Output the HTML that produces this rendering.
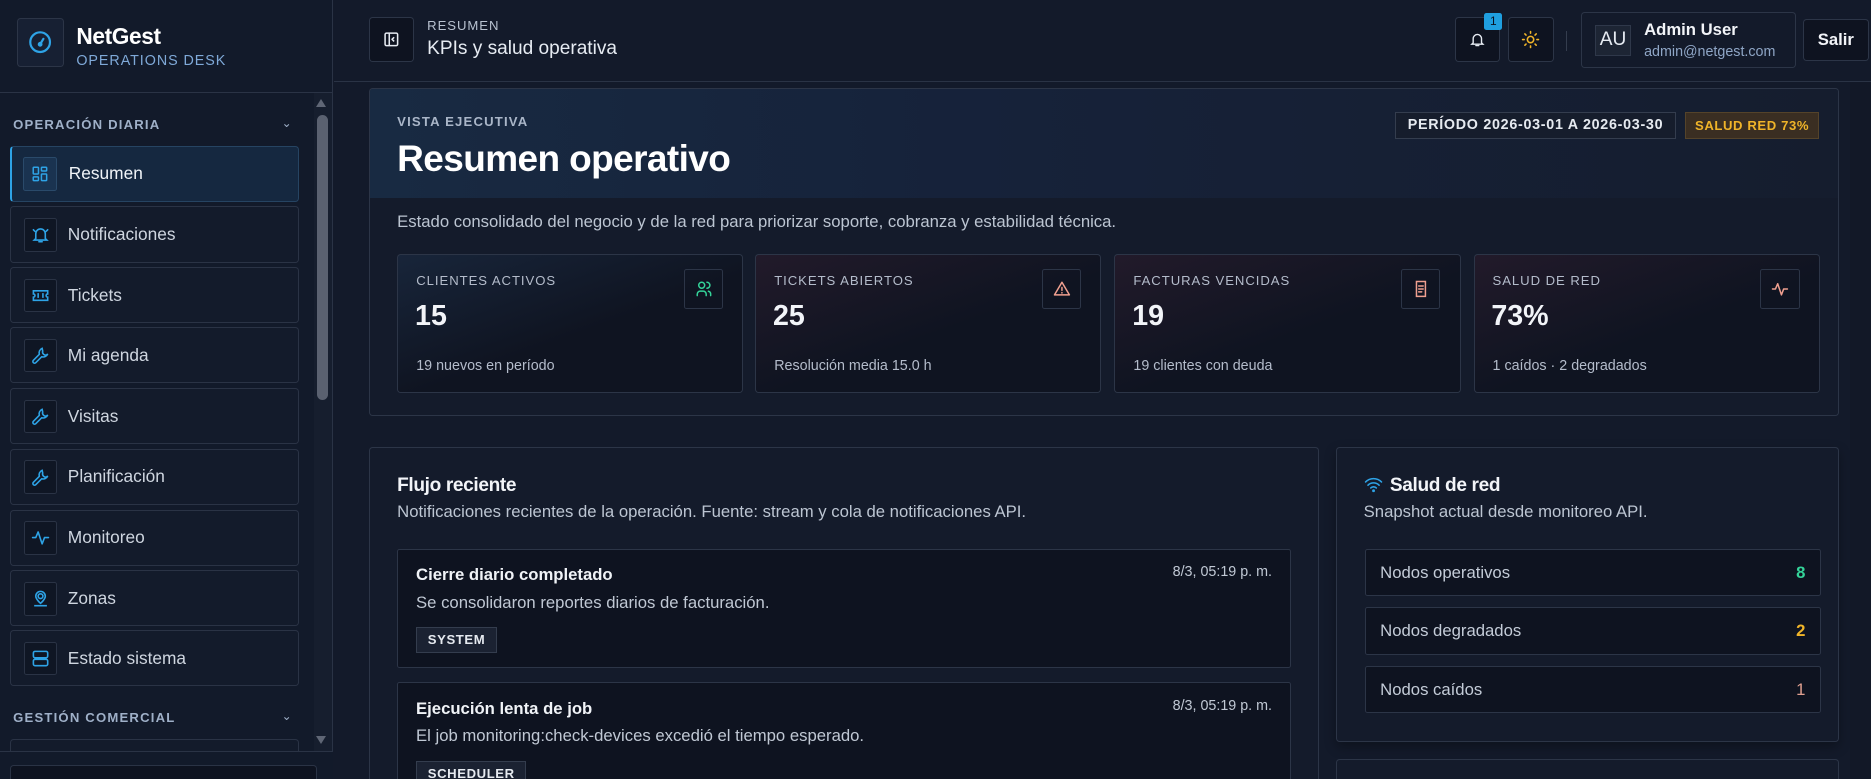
<!DOCTYPE html>
<html><head><meta charset="utf-8"><style>
*{box-sizing:border-box;margin:0;padding:0}
html,body{width:1871px;height:779px;overflow:hidden;background:#131a2a}
#w{zoom:1.19324;width:1568px;height:653px;position:relative;font-family:"Liberation Sans",sans-serif;color:#e6ebf2;background:#131a2a;overflow:hidden}
.a{position:absolute}
.sb{left:0;top:0;width:279px;height:653px;background:#121a2a;border-right:1px solid #2a3345}
.box{border:1px solid #2c3547;border-radius:3px}
.nav{left:8px;width:243px;height:47px;border:1px solid #2a3345;border-radius:3px;background:#131b2b}
.nav .ic{position:absolute;left:11px;top:9px;width:28px;height:28px;border:1px solid #2a3345;border-radius:2px;background:#0f1624;display:flex;align-items:center;justify-content:center}
.nav span{position:absolute;left:48px;top:14px;font-size:14.5px;color:#cfd6e0}
.lab{font-size:11px;font-weight:bold;letter-spacing:1px;color:#9fb0c8}
.kpi{top:213px;width:290px;height:116px;border:1px solid #2c3547;border-radius:3px;background:linear-gradient(160deg,#1a1f30 0%,#0f1421 60%)}
.kpi .l{position:absolute;left:15px;top:15px;font-size:11px;letter-spacing:.8px;color:#b4bccb}
.kpi .v{position:absolute;left:14px;top:38px;font-size:24px;font-weight:bold;color:#f2f4f8}
.kpi .s{position:absolute;left:15px;top:86px;font-size:12px;color:#b4bccb}
.kpi .ib{position:absolute;right:16px;top:12px;width:33px;height:33px;border:1px solid #2c3547;border-radius:2px;display:flex;align-items:center;justify-content:center}
.row{left:23px;width:382px;height:40px;border:1px solid #2c3547;border-radius:2px;background:#0e1320;font-size:14px;color:#c4ccd8}
.row span{position:absolute;left:12px;top:11px}
.row b{position:absolute;right:12px;top:11px;font-weight:bold}
.item{left:23px;width:749px;border:1px solid #2c3547;border-radius:2px;background:#0e1320}
.item .t{position:absolute;left:15px;top:13px;font-size:14px;font-weight:bold;color:#f0f3f7}
.item .d{position:absolute;left:15px;top:36px;font-size:14px;color:#c0c8d4}
.item .tm{position:absolute;right:15px;top:12px;font-size:12px;color:#c0c8d4}
.item .tg{position:absolute;left:15px;top:65px;height:22px;padding:0 9px;border:1px solid #343d4e;background:#1b2232;font-size:11px;font-weight:bold;line-height:20px;letter-spacing:.5px;color:#e6eaf0}
svg{display:block}
</style></head><body><div id="w">

<div class="a sb">
  <div class="a" style="left:0;top:77px;width:279px;height:1px;background:#2a3345"></div>
  <div class="a box" style="left:14px;top:15px;width:40px;height:41px;background:#172033;display:flex;align-items:center;justify-content:center">
    <svg width="22" height="22" viewBox="0 0 24 24" fill="none" stroke="#2ea3e6" stroke-width="2" stroke-linecap="round"><circle cx="12" cy="12" r="9"/><path d="M12 14l3-5"/><circle cx="12" cy="14" r="1.2"/></svg>
  </div>
  <div class="a" style="left:64px;top:19px;font-size:19px;font-weight:bold;color:#fff;letter-spacing:-.3px">NetGest</div>
  <div class="a" style="left:64px;top:44px;font-size:12px;color:#7fa9d8;letter-spacing:.8px">OPERATIONS DESK</div>

  <div class="a lab" style="left:11px;top:98px">OPERACIÓN DIARIA</div>
  <div class="a" style="left:236px;top:97px;font-size:10px;color:#9fb0c8">&#8964;</div>

  <div class="a nav" style="top:122px;background:#152840;border-color:#264462;border-left:2px solid #2ea3e6">
    <div class="ic" style="left:10px;background:#1a3350;border-color:#2a4a6a"><svg width="15" height="15" viewBox="0 0 24 24" fill="none" stroke="#2ea3e6" stroke-width="2"><rect x="3" y="3" width="7" height="9" rx="1"/><rect x="14" y="3" width="7" height="5" rx="1"/><rect x="14" y="12" width="7" height="9" rx="1"/><rect x="3" y="16" width="7" height="5" rx="1"/></svg></div>
    <span style="color:#f0f4f8">Resumen</span></div>
  <div class="a nav" style="top:173px"><div class="ic"><svg width="16" height="16" viewBox="0 0 24 24" fill="none" stroke="#2ea3e6" stroke-width="2" stroke-linecap="round"><path d="M6 17V11a6 6 0 0112 0v6l2 2H4l2-2z"/><path d="M10 21h4M3 6l2 2M21 6l-2 2"/></svg></div><span>Notificaciones</span></div>
  <div class="a nav" style="top:224px"><div class="ic"><svg width="16" height="16" viewBox="0 0 24 24" fill="none" stroke="#2ea3e6" stroke-width="2"><path d="M3 6h18v4a2 2 0 000 4v4H3v-4a2 2 0 000-4z"/><path d="M9 9v6M15 9v6"/></svg></div><span>Tickets</span></div>
  <div class="a nav" style="top:274px"><div class="ic"><svg width="16" height="16" viewBox="0 0 24 24" fill="none" stroke="#2ea3e6" stroke-width="2" stroke-linecap="round"><path d="M14.7 6.3a4 4 0 005 5L21 10a6 6 0 01-7.5 3.5L6 21a2 2 0 01-3-3l7.5-7.5A6 6 0 0114 3z"/></svg></div><span>Mi agenda</span></div>
  <div class="a nav" style="top:325px"><div class="ic"><svg width="16" height="16" viewBox="0 0 24 24" fill="none" stroke="#2ea3e6" stroke-width="2" stroke-linecap="round"><path d="M14.7 6.3a4 4 0 005 5L21 10a6 6 0 01-7.5 3.5L6 21a2 2 0 01-3-3l7.5-7.5A6 6 0 0114 3z"/></svg></div><span>Visitas</span></div>
  <div class="a nav" style="top:376px"><div class="ic"><svg width="16" height="16" viewBox="0 0 24 24" fill="none" stroke="#2ea3e6" stroke-width="2" stroke-linecap="round"><path d="M14.7 6.3a4 4 0 005 5L21 10a6 6 0 01-7.5 3.5L6 21a2 2 0 01-3-3l7.5-7.5A6 6 0 0114 3z"/></svg></div><span>Planificación</span></div>
  <div class="a nav" style="top:427px"><div class="ic"><svg width="16" height="16" viewBox="0 0 24 24" fill="none" stroke="#2ea3e6" stroke-width="2" stroke-linecap="round" stroke-linejoin="round"><path d="M2 12h4l3-7 5 15 3-8h5"/></svg></div><span>Monitoreo</span></div>
  <div class="a nav" style="top:478px"><div class="ic"><svg width="16" height="16" viewBox="0 0 24 24" fill="none" stroke="#2ea3e6" stroke-width="2"><circle cx="12" cy="9" r="3"/><path d="M12 18s-6-5-6-9a6 6 0 0112 0c0 4-6 9-6 9z"/><path d="M4 21h16"/></svg></div><span>Zonas</span></div>
  <div class="a nav" style="top:528px"><div class="ic"><svg width="16" height="16" viewBox="0 0 24 24" fill="none" stroke="#2ea3e6" stroke-width="2"><rect x="3" y="3" width="18" height="8" rx="2"/><rect x="3" y="13" width="18" height="8" rx="2"/></svg></div><span>Estado sistema</span></div>

  <div class="a lab" style="left:11px;top:595px">GESTIÓN COMERCIAL</div>
  <div class="a" style="left:236px;top:594px;font-size:10px;color:#9fb0c8">&#8964;</div>
  <div class="a nav" style="top:619px;height:20px;border-bottom:none"></div>
  <div class="a" style="left:263px;top:78px;width:15px;height:551px;background:#161e2e"></div>
  <div class="a" style="left:265px;top:83px;width:0;height:0;border-left:5px solid transparent;border-right:5px solid transparent;border-bottom:7px solid #5f6675"></div>
  <div class="a" style="left:266px;top:96px;width:9px;height:239px;background:#5a6170;border-radius:5px"></div>
  <div class="a" style="left:265px;top:617px;width:0;height:0;border-left:5px solid transparent;border-right:5px solid transparent;border-top:7px solid #5f6675"></div>
  <div class="a" style="left:0;top:629px;width:279px;height:24px;background:#121a2a;border-top:1px solid #2a3345"></div>
  <div class="a" style="left:8px;top:641px;width:258px;height:20px;background:#0e1320;border:1px solid #2a3345;border-radius:3px"></div>
</div>

<div class="a" style="left:280px;top:68px;width:1288px;height:1px;background:#2a3345"></div>
<div class="a box" style="left:309px;top:14px;width:38px;height:38px;background:#0e1320;display:flex;align-items:center;justify-content:center">
  <svg width="14" height="14" viewBox="0 0 24 24" fill="none" stroke="#e6ebf2" stroke-width="2.2" stroke-linejoin="round"><rect x="3" y="3" width="18" height="18" rx="2"/><path d="M9 3v18M16 9l-3 3 3 3"/></svg>
</div>
<div class="a" style="left:358px;top:15px;font-size:11px;letter-spacing:.8px;color:#b8c2d0">RESUMEN</div>
<div class="a" style="left:358px;top:32px;font-size:16px;color:#e6ebf2">KPIs y salud operativa</div>

<div class="a box" style="left:1219px;top:14px;width:38px;height:38px;background:#0e1320;display:flex;align-items:center;justify-content:center">
  <svg width="14" height="14" viewBox="0 0 24 24" fill="none" stroke="#e6ebf2" stroke-width="2" stroke-linecap="round"><path d="M6 17V11a6 6 0 0112 0v6l2 2H4l2-2z"/><path d="M10 21h4"/></svg>
</div>
<div class="a" style="left:1244px;top:11px;width:15px;height:14px;background:#1f9fe0;border-radius:2px;font-size:10px;text-align:center;line-height:14px;color:#0b1220">1</div>
<div class="a box" style="left:1264px;top:14px;width:38px;height:38px;background:#0e1320;display:flex;align-items:center;justify-content:center">
  <svg width="16" height="16" viewBox="0 0 24 24" fill="none" stroke="#f0b429" stroke-width="2" stroke-linecap="round"><circle cx="12" cy="12" r="4"/><path d="M12 2v2M12 20v2M2 12h2M20 12h2M4.9 4.9l1.4 1.4M17.7 17.7l1.4 1.4M4.9 19.1l1.4-1.4M17.7 6.3l1.4-1.4"/></svg>
</div>
<div class="a" style="left:1312px;top:26px;width:1px;height:17px;background:#343d4e"></div>
<div class="a box" style="left:1325px;top:10px;width:180px;height:47px;background:#131a2a">
  <div class="a" style="left:11px;top:10px;width:30px;height:26px;background:#1d2534;border:1px solid #2f384a;font-size:16px;color:#e6ebf2;text-align:center;line-height:24px">AU</div>
  <div class="a" style="left:52px;top:6px;font-size:14px;font-weight:bold;color:#f2f4f8">Admin User</div>
  <div class="a" style="left:52px;top:26px;font-size:12px;color:#8fa6c6">admin@netgest.com</div>
</div>
<div class="a box" style="left:1511px;top:16px;width:55px;height:35px;background:#0e1320;font-size:14px;font-weight:bold;color:#f2f4f8;text-align:center;line-height:33px">Salir</div>

<div class="a" style="left:309px;top:74px;width:1232px;height:275px;border:1px solid #2c3547;border-radius:3px;background:#141b2b;overflow:hidden">
  <div class="a" style="left:0;top:0;width:1232px;height:91px;background:linear-gradient(90deg,#182a42 0%,#16223a 40%,#151d2e 100%)"></div>
  <div class="a" style="left:23px;top:21px;font-size:11px;font-weight:bold;letter-spacing:1px;color:#aab6c8">VISTA EJECUTIVA</div>
  <div class="a" style="left:23px;top:41px;font-size:31px;font-weight:bold;color:#fff;letter-spacing:-.5px">Resumen operativo</div>
  <div class="a" style="left:859px;top:19px;width:236px;height:23px;border:1px solid #343d4e;background:#161d2c;font-size:12px;font-weight:bold;letter-spacing:.6px;color:#e6eaf0;text-align:center;line-height:21px">PERÍODO 2026-03-01 A 2026-03-30</div>
  <div class="a" style="left:1102px;top:19px;width:113px;height:23px;border:1px solid #54432a;background:#3a2e22;font-size:11px;font-weight:bold;letter-spacing:.5px;color:#f0b429;text-align:center;line-height:21px">SALUD RED 73%</div>
  <div class="a" style="left:23px;top:103px;font-size:14px;color:#bcc5d2">Estado consolidado del negocio y de la red para priorizar soporte, cobranza y estabilidad técnica.</div>
</div>
<div class="a kpi" style="left:333px;background:linear-gradient(160deg,#18253a 0%,#0f1421 55%)"><div class="l">CLIENTES ACTIVOS</div><div class="v">15</div><div class="s">19 nuevos en período</div>
  <div class="ib"><svg width="15" height="15" viewBox="0 0 24 24" fill="none" stroke="#34d399" stroke-width="2" stroke-linecap="round"><circle cx="9" cy="7" r="4"/><path d="M3 21v-2a4 4 0 014-4h4a4 4 0 014 4v2M16 3a4 4 0 010 8M21 21v-2a4 4 0 00-3-3.9"/></svg></div></div>
<div class="a kpi" style="left:633px;background:linear-gradient(160deg,#221a2a 0%,#0f1421 55%)"><div class="l">TICKETS ABIERTOS</div><div class="v">25</div><div class="s">Resolución media 15.0 h</div>
  <div class="ib"><svg width="15" height="15" viewBox="0 0 24 24" fill="none" stroke="#f0a090" stroke-width="2" stroke-linecap="round" stroke-linejoin="round"><path d="M12 3L2 20h20z"/><path d="M12 10v4M12 17v.5"/></svg></div></div>
<div class="a kpi" style="left:934px;background:linear-gradient(160deg,#221a2a 0%,#0f1421 55%)"><div class="l">FACTURAS VENCIDAS</div><div class="v">19</div><div class="s">19 clientes con deuda</div>
  <div class="ib"><svg width="15" height="15" viewBox="0 0 24 24" fill="none" stroke="#f0a090" stroke-width="2" stroke-linecap="round"><path d="M6 2h12v20H6z"/><path d="M9 8h6M9 12h6M9 16h4"/></svg></div></div>
<div class="a kpi" style="left:1235px;background:linear-gradient(160deg,#221a2a 0%,#0f1421 55%)"><div class="l">SALUD DE RED</div><div class="v">73%</div><div class="s">1 caídos · 2 degradados</div>
  <div class="ib"><svg width="15" height="15" viewBox="0 0 24 24" fill="none" stroke="#f0a090" stroke-width="2" stroke-linecap="round" stroke-linejoin="round"><path d="M2 12h4l3-7 5 15 3-8h5"/></svg></div></div>

<div class="a" style="left:309px;top:375px;width:796px;height:290px;border:1px solid #2c3547;border-radius:3px;background:#141b2b">
  <div class="a" style="left:23px;top:22px;font-size:16px;font-weight:bold;color:#f2f4f8;letter-spacing:-.3px">Flujo reciente</div>
  <div class="a" style="left:23px;top:45px;font-size:14px;color:#bcc5d2">Notificaciones recientes de la operación. Fuente: stream y cola de notificaciones API.</div>
  <div class="a item" style="top:84px;height:100px"><div class="t">Cierre diario completado</div><div class="tm">8/3, 05:19 p. m.</div><div class="d">Se consolidaron reportes diarios de facturación.</div><div class="tg">SYSTEM</div></div>
  <div class="a item" style="top:196px;height:100px"><div class="t">Ejecución lenta de job</div><div class="tm">8/3, 05:19 p. m.</div><div class="d">El job monitoring:check-devices excedió el tiempo esperado.</div><div class="tg">SCHEDULER</div></div>
</div>

<div class="a" style="left:1120px;top:375px;width:421px;height:247px;border:1px solid #2c3547;border-radius:3px;background:#141b2b;box-shadow:0 4px 10px rgba(0,0,0,.3)">
  <div class="a" style="left:22px;top:23px"><svg width="16" height="14" viewBox="0 0 24 20" fill="none" stroke="#2ea3e6" stroke-width="2" stroke-linecap="round"><path d="M2 7a14 14 0 0120 0M5 11a10 10 0 0114 0M8.5 14.5a5 5 0 017 0"/><circle cx="12" cy="18" r=".8" fill="#2ea3e6"/></svg></div>
  <div class="a" style="left:44px;top:22px;font-size:16px;font-weight:bold;color:#f2f4f8;letter-spacing:-.3px">Salud de red</div>
  <div class="a" style="left:22px;top:45px;font-size:14px;color:#bcc5d2">Snapshot actual desde monitoreo API.</div>
  <div class="a row" style="top:84px"><span>Nodos operativos</span><b style="color:#34d399">8</b></div>
  <div class="a row" style="top:133px"><span>Nodos degradados</span><b style="color:#f0b429">2</b></div>
  <div class="a row" style="top:182px"><span>Nodos caídos</span><b style="color:#e0a090;font-weight:normal">1</b></div>
</div>
<div class="a" style="left:1120px;top:636px;width:421px;height:40px;border:1px solid #2c3547;border-radius:3px;background:#141b2b"></div>
<div class="a" style="left:1550px;top:69px;width:18px;height:584px;background:#121827"></div>

</div></body></html>
